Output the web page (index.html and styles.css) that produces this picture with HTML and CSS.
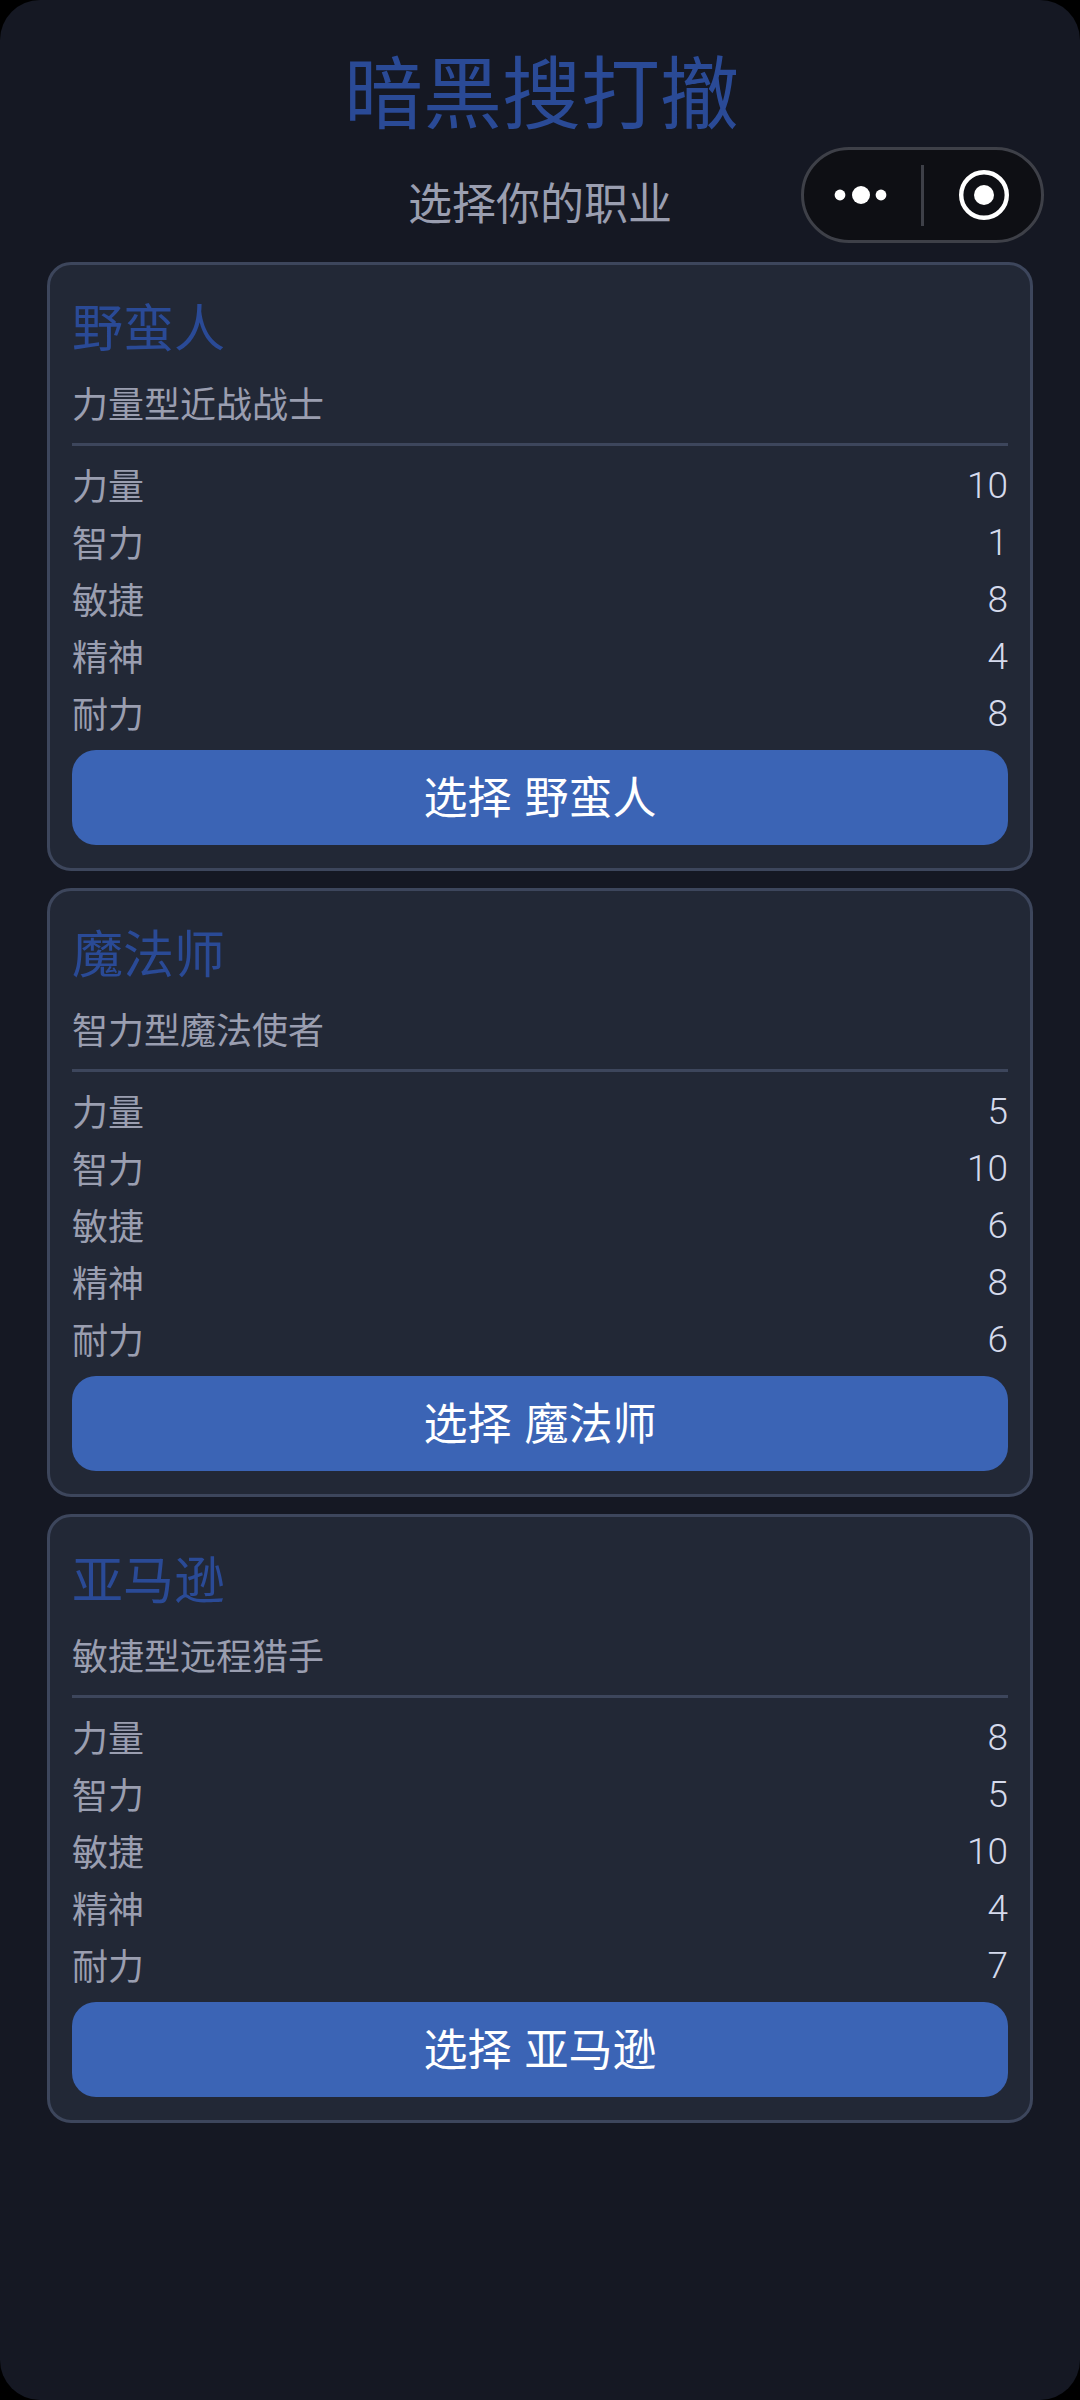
FILE: index.html
```html
<!DOCTYPE html>
<html lang="zh-CN">
<head>
<meta charset="utf-8">
<title>暗黑搜打撤</title>
<link rel="stylesheet" href="styles.css">
</head>
<body>
<main class="screen">
  <header class="head">
    <h1 class="game-title">暗黑搜打撤</h1>
    <p class="game-sub">选择你的职业</p>
  </header>

  <div class="capsule">
    <svg class="capsule-dots" viewBox="0 0 60 20" width="60" height="20"><circle cx="9" cy="10" r="5.4" fill="#fff"/><circle cx="30" cy="10" r="9" fill="#fff"/><circle cx="50" cy="10" r="5.4" fill="#fff"/></svg>
    <span class="capsule-line"></span>
    <svg class="capsule-ring" viewBox="0 0 52 52" width="52" height="52"><circle cx="26" cy="26" r="22.8" fill="none" stroke="#fff" stroke-width="4.4"/><circle cx="26" cy="26" r="10" fill="#fff"/></svg>
  </div>

  <section class="card">
    <h2 class="card-title">野蛮人</h2>
    <p class="card-desc">力量型近战战士</p>
    <ul class="stats">
      <li class="stat"><span>力量</span><b>10</b></li>
      <li class="stat"><span>智力</span><b>1</b></li>
      <li class="stat"><span>敏捷</span><b>8</b></li>
      <li class="stat"><span>精神</span><b>4</b></li>
      <li class="stat"><span>耐力</span><b>8</b></li>
    </ul>
    <button class="pick">选择 野蛮人</button>
  </section>

  <section class="card">
    <h2 class="card-title">魔法师</h2>
    <p class="card-desc">智力型魔法使者</p>
    <ul class="stats">
      <li class="stat"><span>力量</span><b>5</b></li>
      <li class="stat"><span>智力</span><b>10</b></li>
      <li class="stat"><span>敏捷</span><b>6</b></li>
      <li class="stat"><span>精神</span><b>8</b></li>
      <li class="stat"><span>耐力</span><b>6</b></li>
    </ul>
    <button class="pick">选择 魔法师</button>
  </section>

  <section class="card">
    <h2 class="card-title">亚马逊</h2>
    <p class="card-desc">敏捷型远程猎手</p>
    <ul class="stats">
      <li class="stat"><span>力量</span><b>8</b></li>
      <li class="stat"><span>智力</span><b>5</b></li>
      <li class="stat"><span>敏捷</span><b>10</b></li>
      <li class="stat"><span>精神</span><b>4</b></li>
      <li class="stat"><span>耐力</span><b>7</b></li>
    </ul>
    <button class="pick">选择 亚马逊</button>
  </section>
</main>
</body>
</html>
```
FILE: styles.css
```css
* { box-sizing: border-box; }
html, body { margin: 0; padding: 0; background: #000; }
body { font-family: "Noto Sans CJK SC", "Noto Sans", sans-serif; }
.screen {
  position: relative;
  width: 1080px;
  height: 2400px;
  padding: 44px 47px 0;
  background: #151823;
  border-radius: 40px;
  overflow: hidden;
}
.head { text-align: center; }
.game-title {
  margin: 0;
  padding-left: 3px;
  font-size: 79px;
  line-height: 90px;
  font-weight: 400;
  color: #2a4a96;
}
.game-sub {
  margin: 37px 0 31px;
  font-size: 44px;
  line-height: 60px;
  color: #9a9eb0;
  font-weight: 400;
}
.capsule {
  position: absolute;
  left: 801px;
  top: 147px;
  width: 243px;
  height: 96px;
  border: 3px solid #3e4048;
  border-radius: 48px;
  background: #0e0f14;
  display: flex;
  align-items: center;
}
.capsule-dots { margin-left: 27px; }
.capsule-line { width: 3px; height: 61px; margin-left: 30px; background: #3e4048; }
.capsule-ring { margin-left: 34px; }
.card {
  height: 609px;
  margin-bottom: 17px;
  padding: 23px 22px;
  border: 3px solid #3d465c;
  border-radius: 24px;
  background: #222836;
}
.card-title {
  margin: 0;
  font-size: 51px;
  line-height: 74px;
  font-weight: 400;
  color: #2a4a96;
}
.card-desc {
  margin: 15px 0 0;
  font-size: 36px;
  line-height: 50px;
  color: #9a9eb0;
}
.stats {
  list-style: none;
  margin: 16px 0 0;
  padding: 9px 0 0;
  border-top: 3px solid #3d465c;
}
.stat {
  display: flex;
  justify-content: space-between;
  height: 57px;
  align-items: center;
  font-size: 36px;
  color: #9a9eb0;
}
.stat b {
  padding-top: 3px;
  font-family: Roboto, sans-serif;
  font-size: 37px;
  font-weight: 300;
  color: #d5daec;
}
.pick {
  display: block;
  width: 100%;
  height: 95px;
  margin-top: 10px;
  padding: 0 0 6px;
  border: 0;
  border-radius: 24px;
  background: #3b64b5;
  color: #fff;
  font: inherit;
  font-size: 44px;
  word-spacing: 3px;
}
```
